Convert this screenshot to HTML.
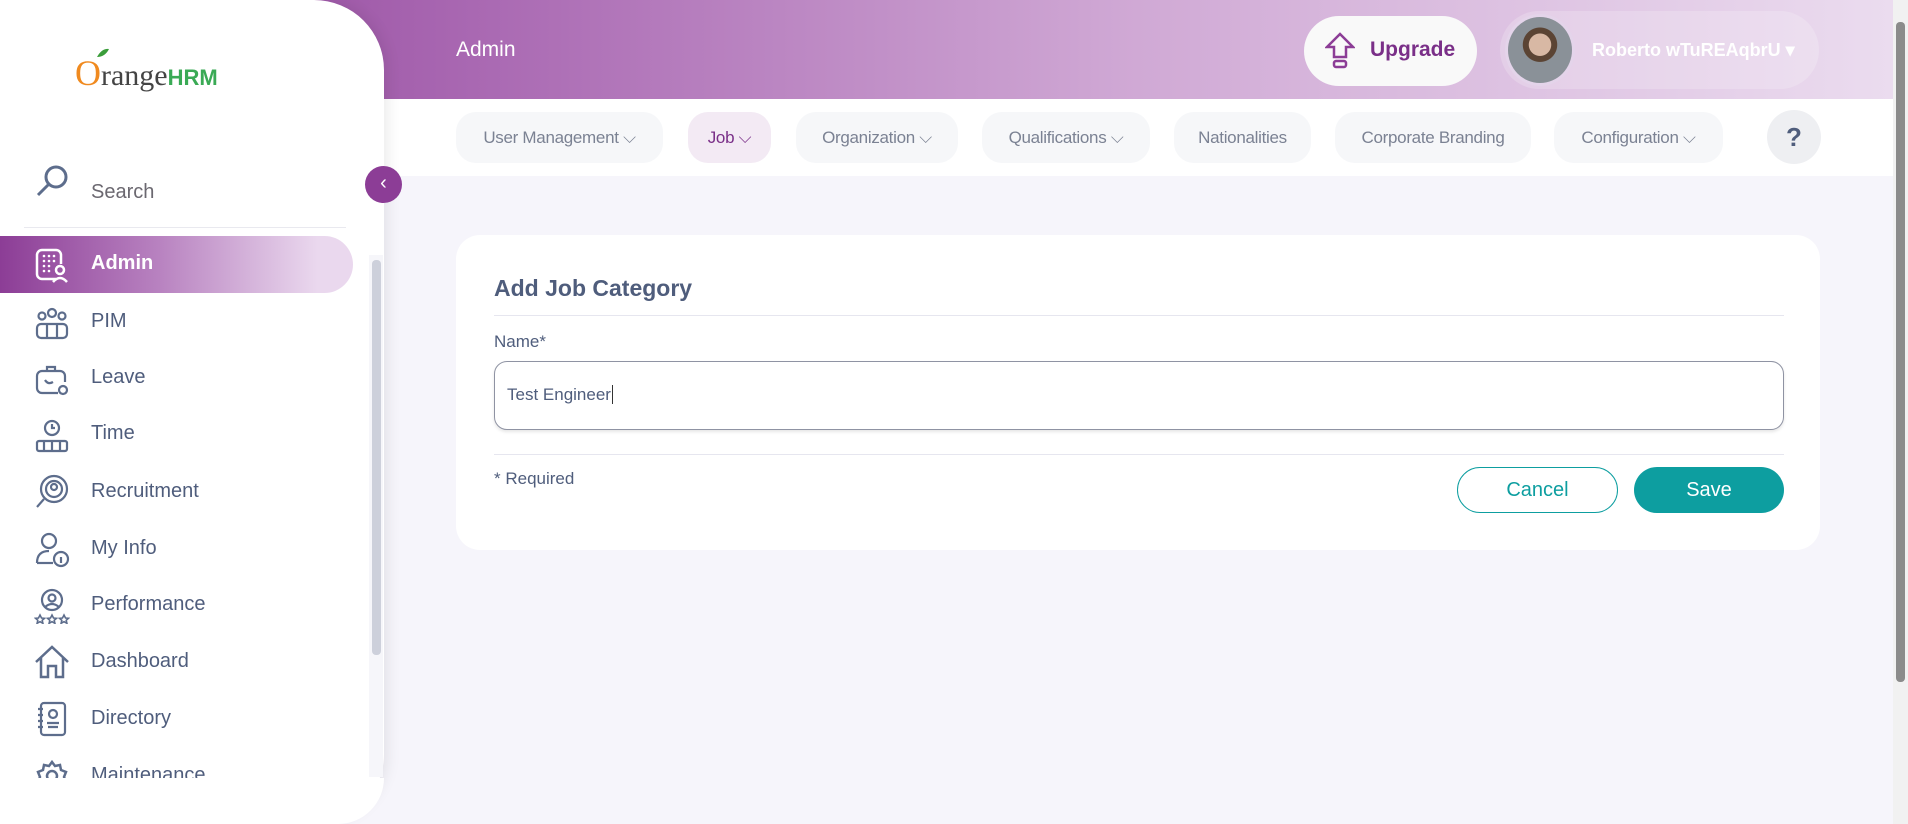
<!DOCTYPE html>
<html><head><meta charset="utf-8"><style>
*{box-sizing:border-box;margin:0;padding:0}
body{width:1908px;height:824px;overflow:hidden;background:#f6f5fb;font-family:"Liberation Sans",sans-serif;position:relative}
.header{position:absolute;left:0;top:0;width:1893px;height:99px;background:linear-gradient(90deg,#8c3d96 0%,#a968b2 25%,#d0a9d5 60%,#ebdcef 100%)}
.nav{position:absolute;left:384px;top:99px;width:1509px;height:77px;background:#fff}
.sidebar{position:absolute;left:0;top:0;width:384px;height:824px;background:#fff;border-radius:0 70px 70px 0;box-shadow:4px 0 14px rgba(0,0,0,.08)}
.tab{position:absolute;top:112px;height:51px;border-radius:20px;background:#f6f7f9;color:#7b8293;font-size:17px;line-height:51px;text-align:center;letter-spacing:-.3px}
.tab.on{background:#f3eaf4;color:#7a2f88}
.mi{position:absolute;left:91px;font-size:20px;color:#4f5d7c}
.ic{position:absolute;left:34px;width:36px;height:36px}
.card{position:absolute;left:456px;top:235px;width:1364px;height:315px;background:#fff;border-radius:24px}
</style></head><body>
<div class="header"></div>
<div style="position:absolute;left:456px;top:38px;font-size:21px;color:#fff">Admin</div>
<div style="position:absolute;left:1304px;top:16px;width:173px;height:70px;border-radius:35px;background:#f9f9f9"></div>
<svg style="position:absolute;left:1325px;top:32px" width="30" height="38" viewBox="0 0 30 38" fill="none" stroke="#8c3d96" stroke-width="2.5"><path d="M15 2 L28 15 H21 V25 H9 V15 H2 Z"/><rect x="9" y="29" width="12" height="6" rx="2"/></svg>
<div style="position:absolute;left:1370px;top:38px;font-size:21px;font-weight:bold;color:#7a2f88">Upgrade</div>
<div style="position:absolute;left:1500px;top:11px;width:319px;height:78px;border-radius:39px;background:rgba(255,255,255,.2)"></div>
<div style="position:absolute;left:1505px;top:14px;width:70px;height:72px;border-radius:50%;background:#e4d4ea"></div>
<div style="position:absolute;left:1508px;top:17px;width:64px;height:66px;border-radius:50%;background:radial-gradient(circle at 50% 42%,#d8b8a4 0 22%,#5b4434 23% 34%,#8a9198 35%)"></div>
<div style="position:absolute;left:1592px;top:40px;font-size:18px;font-weight:bold;color:#fff">Roberto wTuREAqbrU ▾</div>
<div class="nav"></div>
<div class="tab" style="left:456px;width:207px">User Management ⌵</div>
<div class="tab on" style="left:688px;width:83px">Job ⌵</div>
<div class="tab" style="left:796px;width:162px">Organization ⌵</div>
<div class="tab" style="left:982px;width:168px">Qualifications ⌵</div>
<div class="tab" style="left:1174px;width:137px">Nationalities</div>
<div class="tab" style="left:1335px;width:196px">Corporate Branding</div>
<div class="tab" style="left:1554px;width:169px">Configuration ⌵</div>
<div style="position:absolute;left:1767px;top:110px;width:54px;height:54px;border-radius:50%;background:#eeeff2;color:#4f5d7c;font-size:26px;font-weight:bold;text-align:center;line-height:54px">?</div>
<div class="card">
<div style="position:absolute;left:38px;top:40px;font-size:23px;font-weight:bold;color:#4f5d7c">Add Job Category</div>
<div style="position:absolute;left:38px;top:80px;width:1290px;height:1px;background:#e6e6ef"></div>
<div style="position:absolute;left:38px;top:97px;font-size:17px;color:#4f5d7c">Name*</div>
<div style="position:absolute;left:38px;top:126px;width:1290px;height:69px;border:1px solid #8f93a3;border-radius:13px;box-shadow:0 2px 3px rgba(0,0,0,.1)"></div>
<div style="position:absolute;left:51px;top:150px;font-size:17px;color:#4f5d7c">Test Engineer<span style="border-left:1px solid #333;margin-left:1px"></span></div>
<div style="position:absolute;left:38px;top:219px;width:1290px;height:1px;background:#e6e6ef"></div>
<div style="position:absolute;left:38px;top:234px;font-size:17px;color:#4f5d7c">* Required</div>
<div style="position:absolute;left:1001px;top:232px;width:161px;height:46px;border:1px solid #0d9ea0;border-radius:23px;color:#0d9ea0;font-size:20px;text-align:center;line-height:44px">Cancel</div>
<div style="position:absolute;left:1178px;top:232px;width:150px;height:46px;background:#0d9ea0;border-radius:23px;color:#fff;font-size:20px;text-align:center;line-height:46px">Save</div>
</div>
<div style="position:absolute;left:1893px;top:0;width:15px;height:824px;background:#f1f1f1"></div>
<div style="position:absolute;left:1896px;top:22px;width:9px;height:660px;background:#8b8b8b;border-radius:4px"></div>
<div class="sidebar"></div>
<div style="position:absolute;left:75px;top:52px;font-size:30px;font-family:'Liberation Serif',serif;color:#444"><span style="color:#f08a1f;font-size:36px">O</span>range<span style="color:#3aaa55;font-family:'Liberation Sans';font-size:22px;font-weight:bold">HRM</span></div>
<svg style="position:absolute;left:96px;top:48px" width="14" height="10"><path d="M1 9 Q6 0 13 1 Q9 9 1 9Z" fill="#3a9d3a"/></svg>
<svg style="position:absolute;left:34px;top:164px" width="36" height="36" fill="none" stroke="#5d6d8c" stroke-width="3"><circle cx="22" cy="13" r="10"/><path d="M15 20 L4 31"/></svg>
<div class="mi" style="top:181px;color:#6b6870">Search</div>
<div style="position:absolute;left:24px;top:227px;width:322px;height:1px;background:#e9e9ef"></div>
<div style="position:absolute;left:0;top:236px;width:353px;height:57px;border-radius:0 29px 29px 0;background:linear-gradient(90deg,#8c3d96,#b882c0 45%,#ead8ee 90%)"></div>
<svg class="ic" style="top:247px" viewBox="0 0 36 36" fill="none" stroke="#fff" stroke-width="2.5"><path d="M22 32 H8 a5 5 0 0 1 -5 -5 V8 a5 5 0 0 1 5 -5 H22 a5 5 0 0 1 5 5 V17"/><g fill="#fff" stroke="none"><circle cx="10" cy="9" r="1.3"/><circle cx="15" cy="9" r="1.3"/><circle cx="20" cy="9" r="1.3"/><circle cx="10" cy="14" r="1.3"/><circle cx="15" cy="14" r="1.3"/><circle cx="20" cy="14" r="1.3"/><circle cx="10" cy="19" r="1.3"/><circle cx="15" cy="19" r="1.3"/><circle cx="10" cy="24" r="1.3"/><circle cx="15" cy="24" r="1.3"/></g><circle cx="26" cy="23" r="4"/><path d="M19 35 Q26 27 33 35"/></svg>
<div class="mi" style="top:252px;color:#fff;font-weight:bold">Admin</div>
<svg class="ic" style="top:306px" viewBox="0 0 36 36" fill="none" stroke="#5d6d8c" stroke-width="2.2"><circle cx="8" cy="10" r="3.5"/><circle cx="18" cy="7" r="4"/><circle cx="28" cy="10" r="3.5"/><rect x="3" y="18" width="30" height="14" rx="4"/><path d="M13 18 V32 M23 18 V32"/></svg>
<div class="mi" style="top:310px">PIM</div>
<svg class="ic" style="top:362px" viewBox="0 0 36 36" fill="none" stroke="#5d6d8c" stroke-width="2.2"><path d="M24 31 H8 a5 5 0 0 1 -5 -5 V14 a5 5 0 0 1 5 -5 H26 a5 5 0 0 1 5 5 V20"/><path d="M13 9 V5 H21 V9"/><path d="M11 18 Q14 23 19 20"/><circle cx="29" cy="28" r="4"/></svg>
<div class="mi" style="top:366px">Leave</div>
<svg class="ic" style="top:418px" viewBox="0 0 36 36" fill="none" stroke="#5d6d8c" stroke-width="2.2"><circle cx="18" cy="10" r="7"/><path d="M18 6 V10 H21"/><rect x="3" y="23" width="30" height="10" rx="2"/><path d="M10 23 V33 M18 23 V33 M26 23 V33"/></svg>
<div class="mi" style="top:422px">Time</div>
<svg class="ic" style="top:474px" viewBox="0 0 36 36" fill="none" stroke="#5d6d8c" stroke-width="2.2"><circle cx="20" cy="15" r="13"/><circle cx="20" cy="15" r="8"/><circle cx="20" cy="13" r="3"/><path d="M10 25 L3 33"/></svg>
<div class="mi" style="top:480px">Recruitment</div>
<svg class="ic" style="top:532px" viewBox="0 0 36 36" fill="none" stroke="#5d6d8c" stroke-width="2.2"><circle cx="15" cy="9" r="7"/><path d="M3 31 Q3 19 15 19"/><path d="M3 31 H19"/><circle cx="27" cy="27" r="7"/><path d="M27 25 V31"/></svg>
<div class="mi" style="top:537px">My Info</div>
<svg class="ic" style="top:588px" viewBox="0 0 36 36" fill="none" stroke="#5d6d8c" stroke-width="2.2"><circle cx="18" cy="12" r="10"/><circle cx="18" cy="10" r="3.5"/><path d="M11 19 Q18 13 25 19"/><path d="M6 27 l1.5 3 3 .3 -2.3 2 .7 3 -2.9 -1.6 -2.9 1.6 .7 -3 -2.3 -2 3 -.3Z M18 27 l1.5 3 3 .3 -2.3 2 .7 3 -2.9 -1.6 -2.9 1.6 .7 -3 -2.3 -2 3 -.3Z M30 27 l1.5 3 3 .3 -2.3 2 .7 3 -2.9 -1.6 -2.9 1.6 .7 -3 -2.3 -2 3 -.3Z" stroke-width="1.6"/></svg>
<div class="mi" style="top:593px">Performance</div>
<svg class="ic" style="top:644px" viewBox="0 0 36 36" fill="none" stroke="#5d6d8c" stroke-width="2.5"><path d="M2 18 L18 3 L34 18 M7 14 V33 H14 V22 H22 V33 H29 V14"/></svg>
<div class="mi" style="top:650px">Dashboard</div>
<svg class="ic" style="top:701px" viewBox="0 0 36 36" fill="none" stroke="#5d6d8c" stroke-width="2.2"><rect x="7" y="2" width="24" height="32" rx="3"/><path d="M4 8 h5 M4 14 h5 M4 20 h5 M4 26 h5"/><circle cx="19" cy="13" r="4"/><path d="M13 22 h12 M14 26 h10"/></svg>
<div class="mi" style="top:707px">Directory</div>
<svg class="ic" style="top:758px" viewBox="0 0 36 36" fill="none" stroke="#5d6d8c" stroke-width="2.5"><path d="M18 4 l3 4 5 -1 1 5 5 2 -2 5 2 5 -5 2 -1 5 -5 -1 -3 4 -3 -4 -5 1 -1 -5 -5 -2 2 -5 -2 -5 5 -2 1 -5 5 1Z"/><circle cx="18" cy="18" r="5"/></svg>
<div class="mi" style="top:764px">Maintenance</div>
<div style="position:absolute;left:0;top:778px;width:384px;height:46px;background:#fff;border-radius:0 0 70px 0"></div>
<div style="position:absolute;left:369px;top:255px;width:14px;height:522px;background:#f6f6fa"></div>
<div style="position:absolute;left:372px;top:260px;width:9px;height:395px;background:#cdd0db;border-radius:4px"></div>
<div style="position:absolute;left:365px;top:166px;width:37px;height:37px;border-radius:50%;background:#8c3d96;color:#fff;font-size:20px;text-align:center;line-height:35px">‹</div>
</body></html>
